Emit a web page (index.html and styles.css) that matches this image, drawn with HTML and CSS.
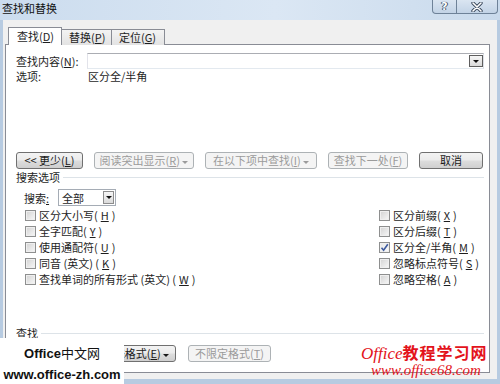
FILE: index.html
```html
<!DOCTYPE html>
<html lang="zh-CN">
<head>
    <meta charset="UTF-8">
    <meta name="viewport" content="width=device-width, initial-scale=1.0">
    <title>查找和替换</title>
    <link rel="stylesheet" href="styles.css">
</head>
<body>
    <div class="window">
        <div class="titlebar">
            <span class="title">查找和替换</span>
            <div class="caption-buttons">
                <div class="cap-btn help">?</div>
                <div class="cap-btn close">
                    <svg width="12" height="10" viewBox="0 0 12 10">
                        <path d="M2 1 L10 9 M10 1 L2 9" stroke="#3b4a5e" stroke-width="3.4" stroke-linecap="round"/>
                        <path d="M2 1 L10 9 M10 1 L2 9" stroke="#ffffff" stroke-width="1.6" stroke-linecap="round"/>
                    </svg>
                </div>
            </div>
        </div>

        <div class="client">
            <div class="tabs">
                <div class="tab active">查找(<u>D</u>)</div>
                <div class="tab tab-replace">替换(<u>P</u>)</div>
                <div class="tab tab-goto">定位(<u>G</u>)</div>
            </div>

            <div class="panel">
                <div class="find-row">
                    <label>查找内容(<u>N</u>):</label>
                    <div class="combo"><span class="drop-btn"></span></div>
                </div>
                <div class="options-row">
                    <span class="opt-label">选项:</span>
                    <span>区分全/半角</span>
                </div>

                <div class="button-row">
                    <div class="btn w-less">&lt;&lt; 更少(<u>L</u>)</div>
                    <div class="btn disabled w-read">阅读突出显示(<u>R</u>) <span class="caret"></span></div>
                    <div class="btn disabled w-in">在以下项中查找(<u>I</u>) <span class="caret"></span></div>
                    <div class="btn disabled w-next">查找下一处(<u>F</u>)</div>
                    <div class="btn w-cancel">取消</div>
                </div>

                <div class="group-title"><span>搜索选项</span></div>

                <div class="search-row">
                    <span class="search-label">搜索<u>:</u></span>
                    <div class="select">全部<span class="drop-btn small"></span></div>
                </div>

                <div class="checks">
                    <div class="check-col">
                        <div class="check"><span class="box"></span>区分大小写(<u>H</u>)</div>
                        <div class="check"><span class="box"></span>全字匹配(<u>Y</u>)</div>
                        <div class="check"><span class="box"></span>使用通配符(<u>U</u>)</div>
                        <div class="check"><span class="box"></span>同音 (英文) (<u>K</u>)</div>
                        <div class="check"><span class="box"></span>查找单词的所有形式 (英文) (<u>W</u>)</div>
                    </div>
                    <div class="check-col right">
                        <div class="check"><span class="box"></span>区分前缀(<u>X</u>)</div>
                        <div class="check"><span class="box"></span>区分后缀(<u>T</u>)</div>
                        <div class="check">
                            <span class="box checked">
                                <svg width="9" height="9" viewBox="0 0 9 9"><path d="M1.5 4.8 L3.6 7.2 L7.8 1.2" fill="none" stroke="#3d5a9e" stroke-width="1.6"/></svg>
                            </span>区分全/半角(<u>M</u>)
                        </div>
                        <div class="check"><span class="box"></span>忽略标点符号(<u>S</u>)</div>
                        <div class="check"><span class="box"></span>忽略空格(<u>A</u>)</div>
                    </div>
                </div>

                <div class="group-title find-title"><span>查找</span></div>

                <div class="button-row bottom">
                    <div class="btn w-special">特殊格式(<u>E</u>) <span class="caret"></span></div>
                    <div class="btn disabled w-noformat">不限定格式(<u>T</u>)</div>
                </div>
            </div>
        </div>
    </div>

    <!-- watermarks -->
    <div class="wm-left">
        <div class="wm-left-name"><b>Office</b>中文网</div>
        <div class="wm-left-url">www.office-zh.com</div>
    </div>
    <div class="wm-right">
        <div class="wm-right-name"><i>Office</i><b>教程学习网</b></div>
        <div class="wm-right-url">www.office68.com</div>
    </div>
</body>
</html>
```

FILE: styles.css
```css
* {
    margin: 0;
    padding: 0;
    box-sizing: border-box;
}

body {
    width: 500px;
    height: 384px;
    overflow: hidden;
    position: relative;
    background: #b7cbe1;
    font-family: "Noto Sans CJK SC", "Liberation Sans", sans-serif;
    font-size: 11px;
    color: #1e1e1e;
}

u {
    text-decoration: underline;
}

/* title bar */
.titlebar {
    height: 20px;
    display: flex;
    justify-content: space-between;
    align-items: flex-start;
    background: linear-gradient(90deg, #cbdcee 0%, #dbe7f4 55%, #c9daec 100%);
}

.title {
    padding: 2px 0 0 2px;
    line-height: 12px;
    font-size: 11px;
    color: #111;
}

.caption-buttons {
    display: flex;
    margin-right: 2px;
}

.cap-btn {
    height: 14px;
    border: 1px solid #6e8298;
    border-top: none;
    display: flex;
    justify-content: center;
    align-items: center;
    background: linear-gradient(#dae5f1, #c2d3e6);
}

.help {
    width: 25px;
    border-radius: 0 0 0 4px;
    color: #fff;
    font-family: "DejaVu Sans", sans-serif;
    font-weight: bold;
    font-size: 11px;
    line-height: 12px;
    text-shadow: 0 0 1px #2f3e52, 1px 0 0 #4a5a70, -1px 0 0 #4a5a70;
}

.close {
    width: 41px;
    border-left: none;
    border-radius: 0 0 4px 0;
}

/* client area */
.client {
    margin: 0 3px;
    height: 359px;
    background: #f0f0f0;
    padding: 7px 0 0 2px;
}

.tabs {
    display: flex;
    align-items: flex-end;
    height: 18px;
    margin: 0 0 -1px 3px;
}

.tab {
    height: 16px;
    line-height: 14px;
    padding-left: 7px;
    border: 1px solid #898c95;
    border-bottom: none;
    background: linear-gradient(#f3f3f3, #e3e3e3);
}

.tab.active {
    position: relative;
    z-index: 1;
    width: 54px;
    height: 18px;
    line-height: 17px;
    padding-left: 8px;
    background: #fff;
}

.tab-replace {
    width: 51px;
    margin-left: -1px;
}

.tab-goto {
    width: 54px;
    margin-left: -1px;
}

.panel {
    width: 485px;
    height: 329px;
    border: 1px solid #898c95;
    background: #fff;
    padding: 8px 5px 0 10px;
}

/* find what */
.find-row {
    display: flex;
    align-items: center;
    height: 16px;
}

.find-row label {
    width: 71px;
    line-height: 16px;
}

.combo {
    flex: 1;
    height: 16px;
    border: 1px solid #abadb3;
    border-color: #abadb3 #dbdfe6 #e3e9ef #e2e3ea;
    display: flex;
    justify-content: flex-end;
    align-items: center;
}

.drop-btn {
    width: 14px;
    height: 12px;
    border: 1px solid #5e5e5e;
    background: linear-gradient(#f6f6f6, #dadada);
    display: flex;
    justify-content: center;
    align-items: center;
}

.drop-btn::after {
    content: "";
    border-left: 3px solid transparent;
    border-right: 3px solid transparent;
    border-top: 3px solid #111;
}

.drop-btn.small {
    width: 11px;
    height: 13px;
    border-color: #8c8c8c;
}

.options-row {
    display: flex;
    line-height: 14px;
}

.opt-label {
    width: 72px;
}

/* buttons */
.button-row {
    display: flex;
    gap: 11px;
    margin-top: 69px;
}

.btn {
    height: 17px;
    line-height: 15px;
    border: 1px solid #707070;
    border-radius: 3px;
    background: linear-gradient(#f3f3f3 0%, #ebebeb 48%, #dddddd 52%, #cfcfcf 100%);
    text-align: center;
    white-space: nowrap;
    color: #1a1a1a;
}

.btn.disabled {
    border-color: #adb2b5;
    background: #f4f4f4;
    color: #9b9b9b;
}

.caret {
    display: inline-block;
    vertical-align: middle;
    border-left: 3px solid transparent;
    border-right: 3px solid transparent;
    border-top: 3px solid currentColor;
}

.w-less { width: 67px; }
.w-read { width: 100px; }
.w-in { width: 112px; }
.w-next { width: 80px; }
.w-cancel { width: 64px; }

/* group titles */
.group-title {
    display: flex;
    align-items: center;
    line-height: 14px;
    margin-top: 1px;
}

.group-title::after {
    content: "";
    flex: 1;
    height: 1px;
    margin-left: 3px;
    background: #dde3e8;
}

.find-title {
    margin-top: 39px;
}

/* search select */
.search-row {
    display: flex;
    align-items: center;
    height: 17px;
    margin-top: 5px;
    padding-left: 8px;
}

.search-label {
    width: 34px;
}

.select {
    width: 58px;
    height: 17px;
    border: 1px solid #a5acb5;
    display: flex;
    align-items: center;
    justify-content: space-between;
    padding: 0 1px 0 3px;
    background: #fff;
}

/* checkboxes */
.checks {
    display: flex;
    margin-top: 1px;
    padding-left: 9px;
}

.check-col {
    flex: 1;
}

.check-col.right {
    flex: 0 0 105px;
}

.check {
    display: flex;
    align-items: center;
    height: 16px;
    gap: 3px;
    white-space: nowrap;
}

.box {
    width: 11px;
    height: 11px;
    border: 1px solid #8e8f8f;
    background: linear-gradient(135deg, #d2d2d2, #f8f8f8);
    box-shadow: inset 0 0 0 1px #efefef;
    display: flex;
    justify-content: center;
    align-items: center;
}

.box.checked {
    background: linear-gradient(135deg, #e6e6e6, #fbfbfb);
}

/* bottom buttons (the first one sits under the watermark) */
.button-row.bottom {
    gap: 12px;
    margin-top: 5px;
}

.w-special {
    width: 80px;
    margin-left: 80px;
}

.w-noformat { width: 83px; }

/* watermarks */
.wm-left {
    position: absolute;
    left: 0;
    top: 338px;
    width: 124px;
    height: 46px;
    background: #fff;
    font-family: "Liberation Sans", "Noto Sans CJK SC", sans-serif;
    color: #111;
    text-align: center;
}

.wm-left-name {
    margin-top: 8px;
    font-size: 13px;
    line-height: 16px;
}

.wm-left-name b {
    font-weight: bold;
}

.wm-left-url {
    margin-top: 5px;
    font-size: 13px;
    line-height: 16px;
    font-weight: bold;
}

.wm-right {
    position: absolute;
    left: 361px;
    top: 343px;
    color: #e3131b;
}

.wm-right-name {
    line-height: 18px;
    white-space: nowrap;
}

.wm-right-name i {
    font-family: "Liberation Serif", serif;
    font-size: 17px;
}

.wm-right-name b {
    font-family: "Noto Sans CJK SC", sans-serif;
    font-size: 16px;
    font-weight: bold;
    letter-spacing: 1px;
}

.wm-right-url {
    margin: 0 0 0 10px;
    font-family: "Liberation Serif", serif;
    font-style: italic;
    font-size: 15px;
    line-height: 14px;
}
```
